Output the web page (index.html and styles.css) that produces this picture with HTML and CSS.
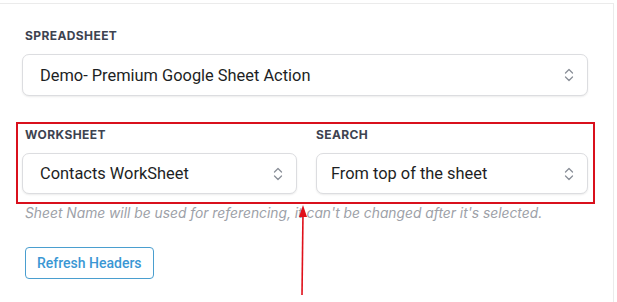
FILE: index.html
```html
<!DOCTYPE html>
<html lang="en">
<head>
    <meta charset="UTF-8">
    <meta name="viewport" content="width=device-width, initial-scale=1.0">
    <title>Spreadsheet Settings</title>
    <link rel="stylesheet" href="styles.css">
</head>
<body>
    <div class="panel">
        <!-- Spreadsheet picker -->
        <div class="field">
            <label class="field-label">SPREADSHEET</label>
            <div class="select">
                <span>Demo- Premium Google Sheet Action</span>
                <svg class="chevrons" width="10" height="14" viewBox="0 0 10 14"><path d="M1.5 5 L5 1.5 L8.5 5 M1.5 9 L5 12.5 L8.5 9" fill="none" stroke="#8a8f98" stroke-width="1.3" stroke-linecap="round" stroke-linejoin="round"/></svg>
            </div>
        </div>

        <!-- Worksheet + search row -->
        <div class="field-row">
            <div class="field">
                <label class="field-label">WORKSHEET</label>
                <div class="select">
                    <span>Contacts WorkSheet</span>
                    <svg class="chevrons" width="10" height="14" viewBox="0 0 10 14"><path d="M1.5 5 L5 1.5 L8.5 5 M1.5 9 L5 12.5 L8.5 9" fill="none" stroke="#8a8f98" stroke-width="1.3" stroke-linecap="round" stroke-linejoin="round"/></svg>
                </div>
            </div>
            <div class="field field-search">
                <label class="field-label">SEARCH</label>
                <div class="select">
                    <span>From top of the sheet</span>
                    <svg class="chevrons" width="10" height="14" viewBox="0 0 10 14"><path d="M1.5 5 L5 1.5 L8.5 5 M1.5 9 L5 12.5 L8.5 9" fill="none" stroke="#8a8f98" stroke-width="1.3" stroke-linecap="round" stroke-linejoin="round"/></svg>
                </div>
            </div>
            <!-- annotation box -->
            <div class="highlight"></div>
        </div>

        <p class="hint">Sheet Name will be used for referencing, it can't be changed after it's selected.</p>

        <button class="btn-outline">Refresh Headers</button>

        <!-- annotation arrow -->
        <svg class="arrow" width="12" height="92" viewBox="0 0 12 92">
            <path d="M6 8 L5 90" stroke="#e0101a" stroke-width="1.6" fill="none"/>
            <path d="M6 0 L10 12 L2 12 Z" fill="#e0101a"/>
        </svg>
    </div>
</body>
</html>
```

FILE: styles.css
```css
/* Basic styling */
body {
    font-family: Roboto, "Noto Sans", sans-serif;
    margin: 0;
    padding: 0;
    background-color: #ffffff;
}

.panel {
    position: relative;
    box-sizing: border-box;
    width: 614px;
    height: 299px;
    margin-top: 3px;
    padding: 24px 25px 0 22px;
    border-top: 1px solid #ebebeb;
    border-right: 1px solid #ebebeb;
}

.field-label {
    display: block;
    margin: 0 0 10px 3px;
    font-family: Inter, "Noto Sans", sans-serif;
    font-size: 12px;
    line-height: 16px;
    font-weight: 700;
    letter-spacing: 0.4px;
    color: #3d4350;
}

.select {
    display: flex;
    align-items: center;
    justify-content: space-between;
    box-sizing: border-box;
    height: 42px;
    padding: 0 13px 0 17px;
    border: 1px solid #dcdde0;
    border-radius: 7px;
    background-color: white;
    box-shadow: 0 1px 2px rgba(0, 0, 0, 0.08);
    font-size: 16.4px;
    color: #1d1f24;
}

.chevrons {
    display: block;
}

/* Worksheet + search */
.field-row {
    position: relative;
    display: grid;
    grid-template-columns: 275px 272px;
    column-gap: 19px;
    margin-top: 31px;
}

.field-row .select {
    height: 41px;
}

.field-search .field-label {
    margin-left: 0;
}

.field-search .select {
    padding-left: 14px;
}

/* Red annotation box */
.highlight {
    position: absolute;
    left: -6px;
    right: -7px;
    top: -5px;
    bottom: -10px;
    border: 2px solid #d9101c;
}

.hint {
    margin: 11px 0 0 3px;
    font-family: Inter, "Noto Sans", sans-serif;
    font-size: 13.8px;
    font-style: italic;
    color: #9da1a8;
}

.btn-outline {
    margin: 26px 0 0 3px;
    padding: 0 11px;
    height: 32px;
    font-family: Roboto, "Noto Sans", sans-serif;
    font-size: 14px;
    font-weight: 500;
    color: #3a97d4;
    background-color: white;
    border: 1px solid #4a9ecf;
    border-radius: 4px;
    cursor: pointer;
}

/* Red annotation arrow */
.arrow {
    position: absolute;
    left: 297px;
    top: 201px;
}
```
